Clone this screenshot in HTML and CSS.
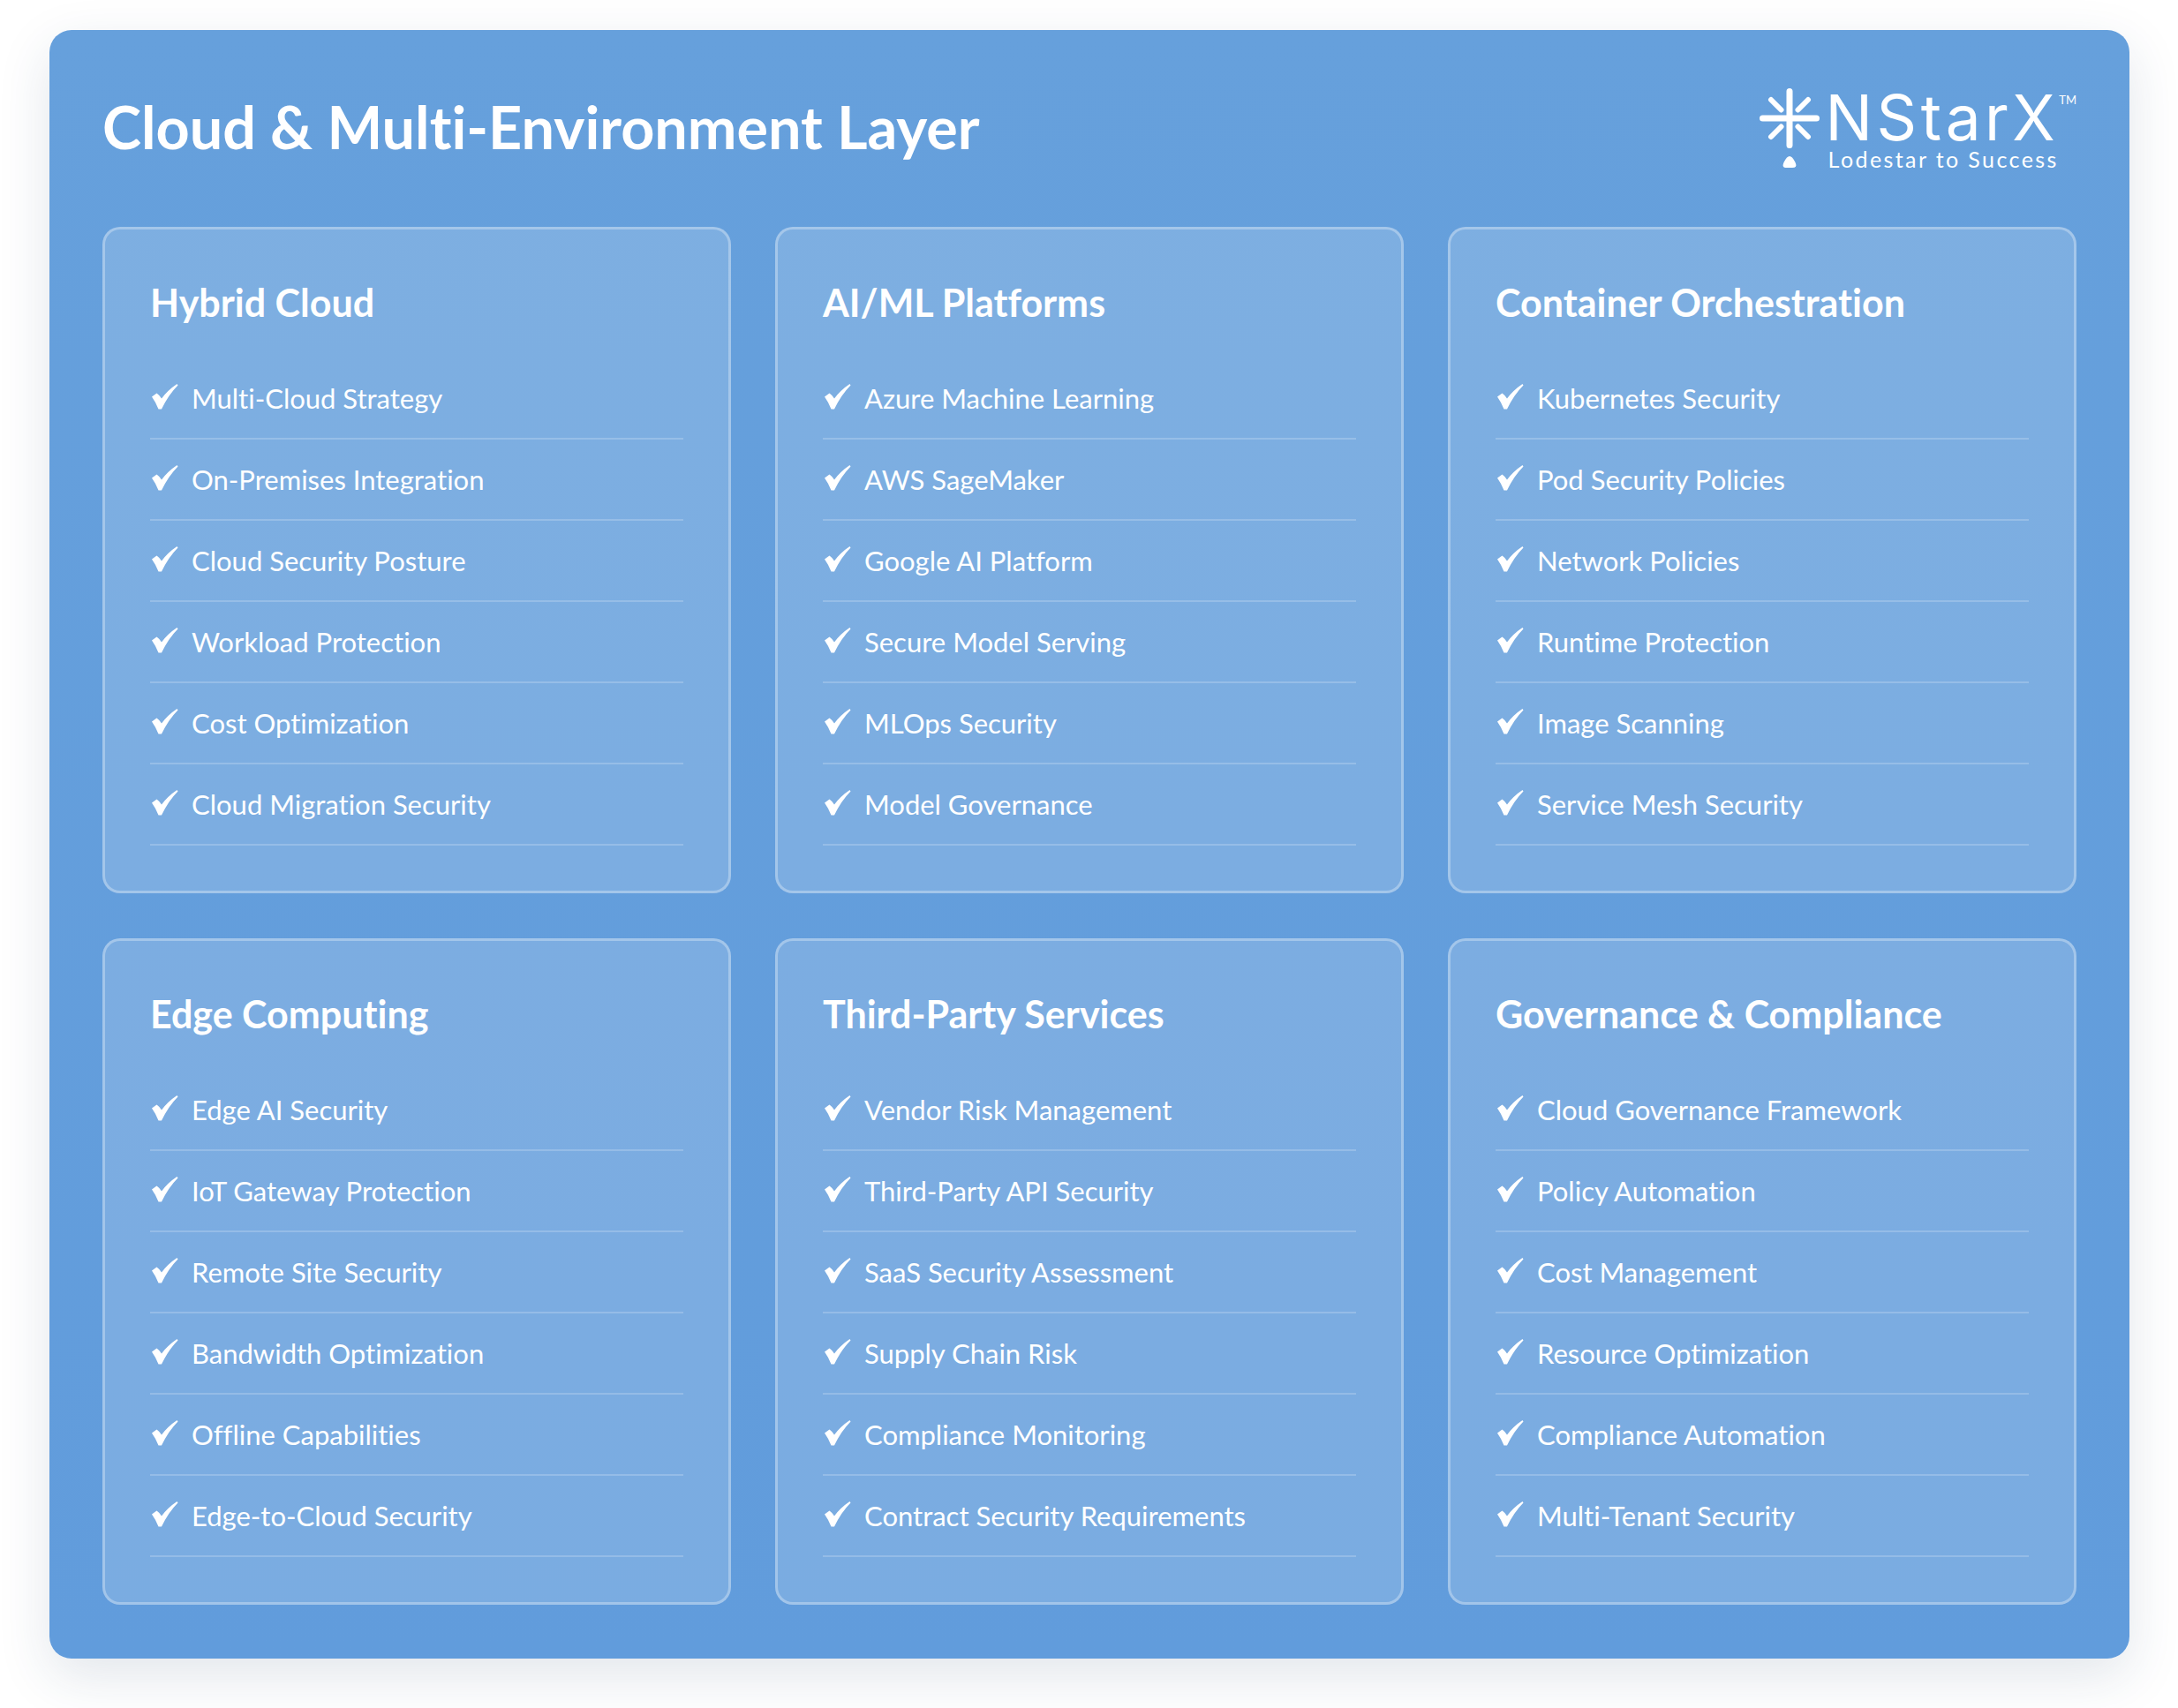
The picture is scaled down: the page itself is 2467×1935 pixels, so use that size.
FILE: index.html
```html
<!DOCTYPE html>
<html lang="en">
<head>
<meta charset="utf-8">
<title>Cloud &amp; Multi-Environment Layer</title>
<link rel="stylesheet" href="styles.css">
</head>
<body>
<svg class="defs" width="0" height="0"><defs>
<symbol id="chk" viewBox="0 0 30 30"><path d="M0 14.5 L5.5 10.5 Q8.5 12.5 11 16.5 Q18 7 28.5 0 L29.5 1.5 Q19 12 11 28.5 L7.5 28.5 Q4 20 0 14.5 Z"/></symbol>
</defs></svg>
<main class="panel">
<header class="head">
<h1 class="title">Cloud &amp; Multi-Environment Layer</h1>
<div class="logo">
<svg class="star" viewBox="0 0 68 90"><g stroke="#fff" stroke-linecap="round"><path stroke-width="7" d="M34 3.5V64.5M3.5 34H64.5"/><path stroke-width="6" d="M13 13L24.5 24.5M55 13L43.5 24.5M13 55L24.5 43.5M55 55L43.5 43.5"/></g><path d="M34 77Q37 77 40 83Q44 90 37 90H31Q24 90 28 83Q31 77 34 77Z" fill="#fff"/></svg>
<div class="wordmark">
<div class="brand">NStarX<span class="tm">TM</span></div>
<div class="tag">Lodestar to Success</div>
</div>
</div>
</header>
<div class="grid">
<section class="card"><h2 class="card-title">Hybrid Cloud</h2><ul class="list">
<li class="item"><svg class="check"><use href="#chk"/></svg>Multi-Cloud Strategy</li>
<li class="item"><svg class="check"><use href="#chk"/></svg>On-Premises Integration</li>
<li class="item"><svg class="check"><use href="#chk"/></svg>Cloud Security Posture</li>
<li class="item"><svg class="check"><use href="#chk"/></svg>Workload Protection</li>
<li class="item"><svg class="check"><use href="#chk"/></svg>Cost Optimization</li>
<li class="item"><svg class="check"><use href="#chk"/></svg>Cloud Migration Security</li>
</ul></section>
<section class="card"><h2 class="card-title">AI/ML Platforms</h2><ul class="list">
<li class="item"><svg class="check"><use href="#chk"/></svg>Azure Machine Learning</li>
<li class="item"><svg class="check"><use href="#chk"/></svg>AWS SageMaker</li>
<li class="item"><svg class="check"><use href="#chk"/></svg>Google AI Platform</li>
<li class="item"><svg class="check"><use href="#chk"/></svg>Secure Model Serving</li>
<li class="item"><svg class="check"><use href="#chk"/></svg>MLOps Security</li>
<li class="item"><svg class="check"><use href="#chk"/></svg>Model Governance</li>
</ul></section>
<section class="card"><h2 class="card-title">Container Orchestration</h2><ul class="list">
<li class="item"><svg class="check"><use href="#chk"/></svg>Kubernetes Security</li>
<li class="item"><svg class="check"><use href="#chk"/></svg>Pod Security Policies</li>
<li class="item"><svg class="check"><use href="#chk"/></svg>Network Policies</li>
<li class="item"><svg class="check"><use href="#chk"/></svg>Runtime Protection</li>
<li class="item"><svg class="check"><use href="#chk"/></svg>Image Scanning</li>
<li class="item"><svg class="check"><use href="#chk"/></svg>Service Mesh Security</li>
</ul></section>
<section class="card"><h2 class="card-title">Edge Computing</h2><ul class="list">
<li class="item"><svg class="check"><use href="#chk"/></svg>Edge AI Security</li>
<li class="item"><svg class="check"><use href="#chk"/></svg>IoT Gateway Protection</li>
<li class="item"><svg class="check"><use href="#chk"/></svg>Remote Site Security</li>
<li class="item"><svg class="check"><use href="#chk"/></svg>Bandwidth Optimization</li>
<li class="item"><svg class="check"><use href="#chk"/></svg>Offline Capabilities</li>
<li class="item"><svg class="check"><use href="#chk"/></svg>Edge-to-Cloud Security</li>
</ul></section>
<section class="card"><h2 class="card-title">Third-Party Services</h2><ul class="list">
<li class="item"><svg class="check"><use href="#chk"/></svg>Vendor Risk Management</li>
<li class="item"><svg class="check"><use href="#chk"/></svg>Third-Party API Security</li>
<li class="item"><svg class="check"><use href="#chk"/></svg>SaaS Security Assessment</li>
<li class="item"><svg class="check"><use href="#chk"/></svg>Supply Chain Risk</li>
<li class="item"><svg class="check"><use href="#chk"/></svg>Compliance Monitoring</li>
<li class="item"><svg class="check"><use href="#chk"/></svg>Contract Security Requirements</li>
</ul></section>
<section class="card"><h2 class="card-title">Governance &amp; Compliance</h2><ul class="list">
<li class="item"><svg class="check"><use href="#chk"/></svg>Cloud Governance Framework</li>
<li class="item"><svg class="check"><use href="#chk"/></svg>Policy Automation</li>
<li class="item"><svg class="check"><use href="#chk"/></svg>Cost Management</li>
<li class="item"><svg class="check"><use href="#chk"/></svg>Resource Optimization</li>
<li class="item"><svg class="check"><use href="#chk"/></svg>Compliance Automation</li>
<li class="item"><svg class="check"><use href="#chk"/></svg>Multi-Tenant Security</li>
</ul></section>
</div>
</main>
</body>
</html>
```
FILE: styles.css
```css
* { box-sizing: border-box; }
html, body { margin: 0; background: #fff; }
body { padding: 34px 55px 56px 56px; font-family: "Lato", "Noto Sans", sans-serif; font-variant-ligatures: none; color: #fff; height: 1935px; overflow: hidden; }
.defs { display: block; height: 0; }
.panel { height: 1845px; background: linear-gradient(180deg, #66a0dc 0%, #619cdc 100%); border-radius: 25px; padding: 60px; box-shadow: 0 20px 60px rgba(30, 60, 100, 0.13); }
.head { height: 163px; display: flex; justify-content: space-between; align-items: flex-start; }
.title { margin: 10px 0 0; font-size: 66.5px; line-height: 78px; font-weight: 700; }
.logo { display: flex; align-items: flex-start; gap: 7px; margin-top: 6px; }
.star { width: 68px; height: 90px; display: block; }
.wordmark { display: flex; flex-direction: column; }
.brand { display: flex; align-items: flex-start; font-family: "Inter", "Lato", sans-serif; font-size: 71px; line-height: 66px; font-weight: 400; letter-spacing: 4.5px; }
.tm { margin-top: 6px; margin-left: 0; font-family: "Lato", sans-serif; font-size: 13px; line-height: 14px; font-weight: 400; letter-spacing: 0; }
.tag { margin-left: 3px; font-size: 25px; line-height: 28px; font-weight: 400; letter-spacing: 2.4px; }
.grid { display: grid; grid-template-columns: repeat(3, 712px); column-gap: 50px; row-gap: 51px; }
.card { height: 755px; background: rgba(255, 255, 255, 0.16); border: 3px solid rgba(255, 255, 255, 0.3); border-radius: 20px; padding: 51px; }
.card-title { margin: 0 0 31px; font-size: 43px; line-height: 64px; font-weight: 700; }
.list { list-style: none; margin: 0; padding: 0; }
.item { height: 92px; display: flex; align-items: center; gap: 15px; font-size: 31px; border-bottom: 2px solid rgba(255, 255, 255, 0.2); }
.check { width: 30px; height: 30px; fill: #fff; flex: none; margin: -3px 0 0 2px; }
```
